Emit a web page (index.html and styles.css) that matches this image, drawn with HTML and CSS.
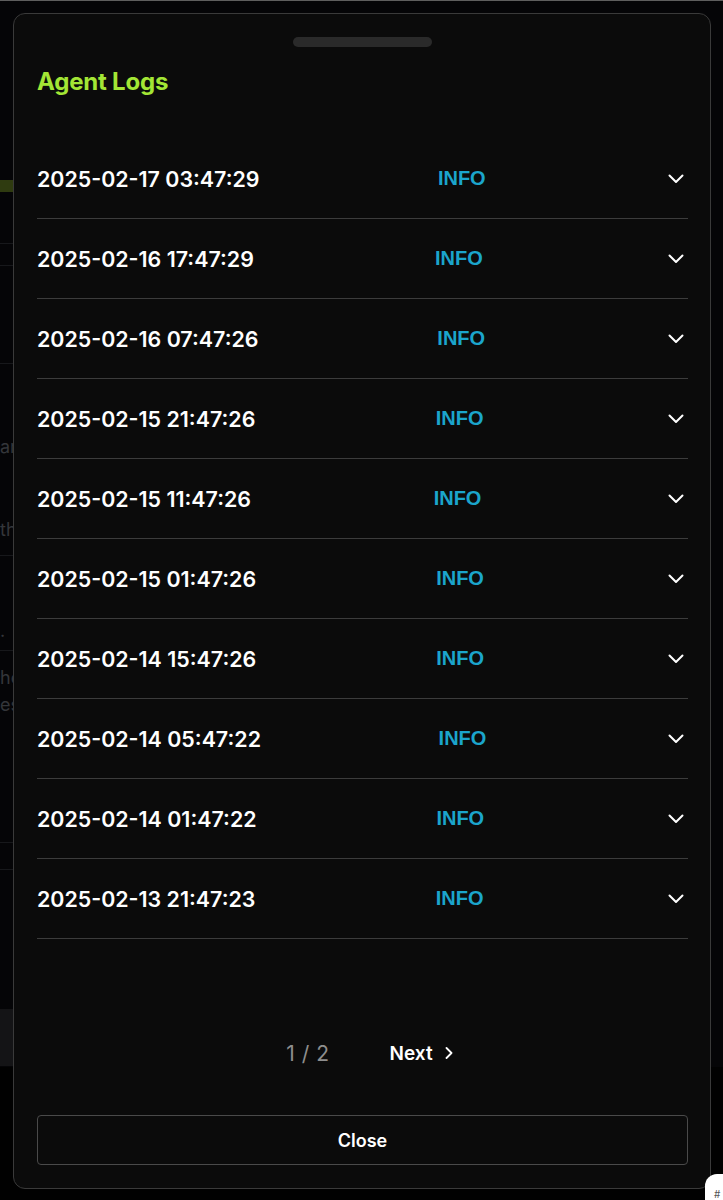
FILE: index.html
```html
<!DOCTYPE html>
<html lang="en">
<head>
<meta charset="utf-8">
<title>Agent Logs</title>
<link rel="stylesheet" href="styles.css">
</head>
<body>
<div class="page">
  <div class="page-col">
    <div class="bg-bar"></div>
    <div class="bg-row bg-row-a"></div>
    <div class="bg-row bg-row-b"></div>
    <div class="bg-row bg-row-c"></div>
    <p class="bg-text bg-t1">ar</p>
    <p class="bg-text bg-t2">th</p>
    <div class="bg-row bg-row-d"></div>
    <p class="bg-text bg-t3">.</p>
    <div class="bg-row bg-row-e"></div>
    <p class="bg-text bg-t4">he</p>
    <p class="bg-text bg-t5">es</p>
    <div class="bg-row bg-row-f"></div>
    <div class="bg-row bg-row-g"></div>
    <div class="bg-block"></div>
  </div>
</div>

<div class="modal" role="dialog" aria-label="Agent Logs">
  <div class="handle"></div>
  <h2 class="title">Agent Logs</h2>
  <ul class="logs">
    <li class="log"><span class="ts">2025-02-17 03:47:29</span><span class="level">INFO</span><svg class="chev" viewBox="0 0 24 24"><path d="M5.5 8.5l6.5 6.5 6.5-6.5"/></svg></li>
    <li class="log"><span class="ts">2025-02-16 17:47:29</span><span class="level">INFO</span><svg class="chev" viewBox="0 0 24 24"><path d="M5.5 8.5l6.5 6.5 6.5-6.5"/></svg></li>
    <li class="log"><span class="ts">2025-02-16 07:47:26</span><span class="level">INFO</span><svg class="chev" viewBox="0 0 24 24"><path d="M5.5 8.5l6.5 6.5 6.5-6.5"/></svg></li>
    <li class="log"><span class="ts">2025-02-15 21:47:26</span><span class="level">INFO</span><svg class="chev" viewBox="0 0 24 24"><path d="M5.5 8.5l6.5 6.5 6.5-6.5"/></svg></li>
    <li class="log"><span class="ts">2025-02-15 11:47:26</span><span class="level">INFO</span><svg class="chev" viewBox="0 0 24 24"><path d="M5.5 8.5l6.5 6.5 6.5-6.5"/></svg></li>
    <li class="log"><span class="ts">2025-02-15 01:47:26</span><span class="level">INFO</span><svg class="chev" viewBox="0 0 24 24"><path d="M5.5 8.5l6.5 6.5 6.5-6.5"/></svg></li>
    <li class="log"><span class="ts">2025-02-14 15:47:26</span><span class="level">INFO</span><svg class="chev" viewBox="0 0 24 24"><path d="M5.5 8.5l6.5 6.5 6.5-6.5"/></svg></li>
    <li class="log"><span class="ts">2025-02-14 05:47:22</span><span class="level">INFO</span><svg class="chev" viewBox="0 0 24 24"><path d="M5.5 8.5l6.5 6.5 6.5-6.5"/></svg></li>
    <li class="log"><span class="ts">2025-02-14 01:47:22</span><span class="level">INFO</span><svg class="chev" viewBox="0 0 24 24"><path d="M5.5 8.5l6.5 6.5 6.5-6.5"/></svg></li>
    <li class="log"><span class="ts">2025-02-13 21:47:23</span><span class="level">INFO</span><svg class="chev" viewBox="0 0 24 24"><path d="M5.5 8.5l6.5 6.5 6.5-6.5"/></svg></li>
  </ul>
  <div class="footer">
    <div class="pager">
      <span class="pages">1 / 2</span>
      <button class="next" type="button">Next <svg class="next-chev" viewBox="0 0 8 12"><path d="M1.5 1l5 5-5 5"/></svg></button>
    </div>
    <button class="close" type="button">Close</button>
  </div>
</div>

<div class="badge"><span>#</span></div>
</body>
</html>
```

FILE: styles.css
```css
* { box-sizing: border-box; }

html, body {
  margin: 0;
  padding: 0;
  background: #010101;
  font-family: Inter, "Noto Sans", sans-serif;
  overflow: hidden;
}

/* background page, dimmed behind the modal */
.page {
  width: 100%;
  height: 1067px;
  background: #050507;
  border-top: 1px solid #5e5e5e;
}
.page-col {
  width: 360px;
  padding-top: 179px;
}
.bg-bar { height: 12px; background: #2f3b10; }
.bg-row { border-bottom: 1px solid #17181b; }
.bg-row-a { height: 52px; }
.bg-row-b { height: 22px; }
.bg-row-c { height: 98px; }
.bg-text {
  margin: 0;
  font-size: 18px;
  line-height: 24px;
  color: #34363a;
  white-space: nowrap;
}
.bg-t1 { margin-top: 71px; }
.bg-t2 { margin-top: 59px; }
.bg-row-d { height: 14px; }
.bg-t3 { margin-top: 63px; }
.bg-row-e { height: 8px; }
.bg-t4 { margin-top: 15px; }
.bg-t5 { margin-top: 3px; }
.bg-row-f { height: 126px; }
.bg-row-g { height: 27px; }
.bg-block { margin-top: 139px; height: 57px; background: #141416; }

/* modal */
.modal {
  position: fixed;
  left: 13px;
  top: 13px;
  width: 698px;
  height: 1176px;
  border: 1px solid #3a3a3a;
  border-radius: 12px;
  background: #0b0b0b;
  padding: 23px 22px 23px 23px;
  display: flex;
  flex-direction: column;
}

.handle {
  align-self: center;
  width: 139px;
  height: 10px;
  border-radius: 5px;
  background: #2a2a2a;
  flex-shrink: 0;
}

.title {
  margin: 21px 0 0;
  font-size: 24px;
  line-height: 28px;
  font-weight: 700;
  color: #a3e635;
  letter-spacing: -0.2px;
}

.logs {
  list-style: none;
  margin: 43px 0 0;
  padding: 0;
}

.log {
  height: 80px;
  border-bottom: 1px solid #3c3c3c;
  display: flex;
  align-items: center;
  justify-content: space-between;
}

.ts {
  font-size: 21.4px;
  font-weight: 600;
  color: #ffffff;
}

.level {
  font-family: "Liberation Sans", Roboto, sans-serif;
  font-size: 20px;
  font-weight: 700;
  color: #1ba5cc;
}

.chev {
  width: 24px;
  height: 24px;
  fill: none;
  stroke: #ffffff;
  stroke-width: 2;
  stroke-linecap: round;
  stroke-linejoin: round;
}

.footer {
  margin-top: auto;
  display: flex;
  flex-direction: column;
}

.pager {
  display: flex;
  justify-content: center;
  align-items: center;
  gap: 60px;
  height: 40px;
  padding-left: 14px;
  margin-bottom: 42px;
}

.pages {
  font-size: 21px;
  font-weight: 400;
  color: #8e8e8e;
  letter-spacing: 0.5px;
}

.next {
  display: flex;
  align-items: center;
  gap: 12px;
  background: none;
  border: 0;
  padding: 0;
  font-family: Inter, "Noto Sans", sans-serif;
  font-size: 19px;
  font-weight: 600;
  color: #ffffff;
}

.next-chev {
  width: 8px;
  height: 12px;
  fill: none;
  stroke: #ffffff;
  stroke-width: 1.8;
  stroke-linecap: round;
  stroke-linejoin: round;
}

.close {
  height: 50px;
  width: 100%;
  border: 1px solid #4a4a4a;
  border-radius: 4px;
  background: #0b0b0b;
  font-family: Inter, "Noto Sans", sans-serif;
  font-size: 18px;
  font-weight: 600;
  color: #ffffff;
}

.badge {
  position: fixed;
  left: 705px;
  top: 1174px;
  width: 40px;
  height: 40px;
  border-radius: 12px;
  background: #ffffff;
  padding: 14px 0 0 9px;
  font-size: 10px;
  line-height: 12px;
  color: #555;
}
```
